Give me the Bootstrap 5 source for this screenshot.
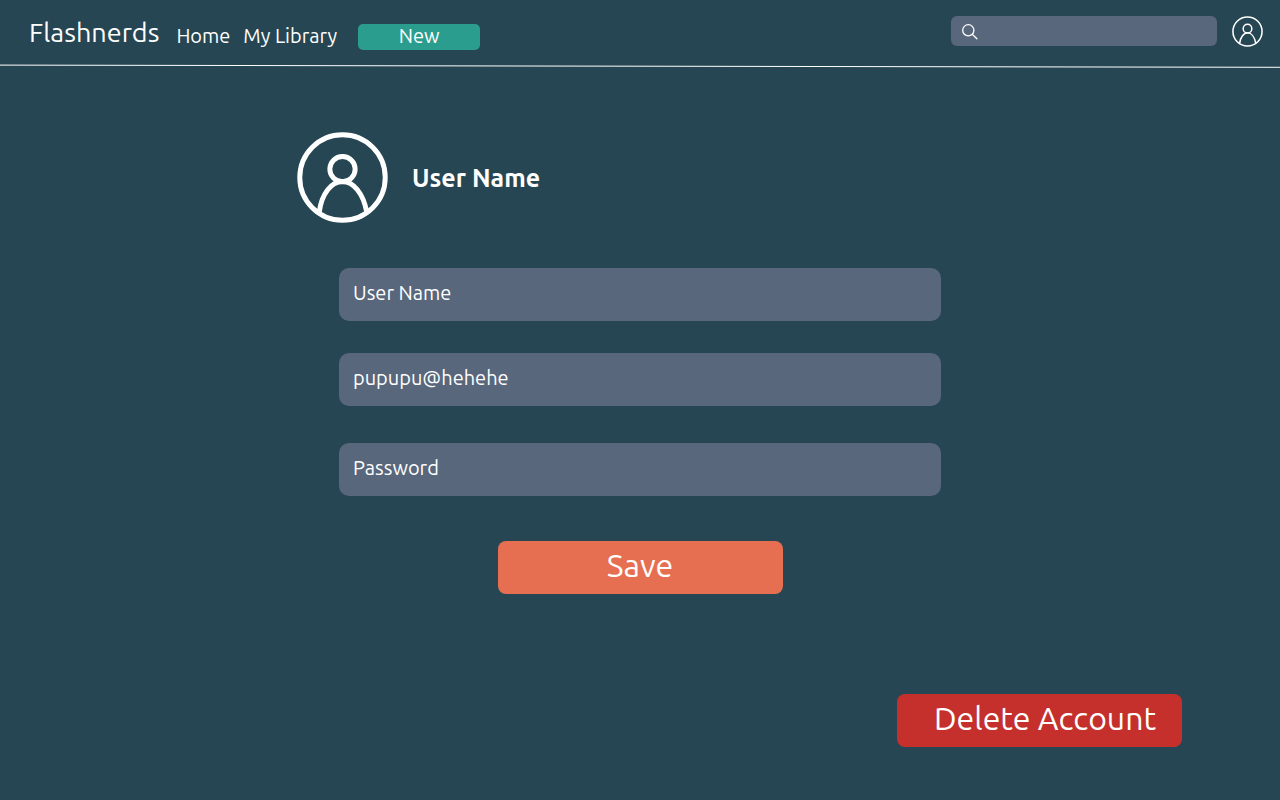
<!DOCTYPE html>
<html lang="en">
<head>
<meta charset="utf-8">
<meta name="viewport" content="width=device-width, initial-scale=1">
<title>Flashnerds – Account</title>
<link href="https://cdn.jsdelivr.net/npm/bootstrap@5.3.0/dist/css/bootstrap.min.css" rel="stylesheet">
<style>
  body { background: #264653; color: #fff; font-family: Ubuntu, "Noto Sans", sans-serif; }
  .topbar { height: 64px; padding: 0 17px 0 29px; }
  .brand { font-size: 27px; line-height: 32px; margin-top: 16px; color: #fff; }
  .menu { margin: 24px 0 0 17px; gap: 13px; font-size: 20px; line-height: 24px; }
  .menu a { color: #fff; }
  .btn-new { width: 122px; height: 26px; margin: 24px 0 0 21px; font-size: 20px; line-height: 24px; --bs-btn-bg: #2a9d8f; --bs-btn-hover-bg: #238377; --bs-btn-color: #fff; --bs-btn-hover-color: #fff; --bs-btn-border-radius: 5px; }
  .btn-new.btn { padding: 0 0 2px; }
  .search { width: 266px; margin: 16px 15px 0 0; }
  .search .form-control { height: 30px; padding: 0 10px 0 36px; border-radius: 6px; }
  .search svg { left: 11px; top: 8px; }
  .profile-link { margin-top: 16px; }
  .rule { height: 4px; }
  .form-control, .form-control:focus { background: #59677c; color: #fff; border: 0; }
  .form-control::placeholder { color: #fff; opacity: 1; }
  .account { max-width: 686px; padding-top: 64px; }
  .account h1 { font-size: 25px; line-height: 32px; }
  .fields { padding: 45px 42px 0; }
  .fields .form-control { height: 53px; padding: 0 14px 4px; font-size: 20px; border-radius: 10px; }
  .field-list { gap: 32px; }
  .password-row { padding-top: 5px; }
  .btn-wide { width: 285px; height: 53px; padding-top: 0; padding-bottom: 4px; font-size: 32px; line-height: 49px; --bs-btn-border-radius: 8px; --bs-btn-color: #fff; --bs-btn-hover-color: #fff; }
  .btn-save { margin-top: 45px; --bs-btn-bg: #e76f51; --bs-btn-hover-bg: #d05f43; }
  .btn-delete { padding-left: 23px; --bs-btn-bg: #c5302c; --bs-btn-hover-bg: #a92724; }
  .danger-zone { padding: 100px 98px 53px 0; }
</style>
</head>
<body>
<svg class="d-none">
  <symbol id="person" viewBox="0 0 92 92">
    <circle cx="46" cy="46" r="43.2"/>
    <circle cx="46" cy="37.5" r="12.8"/>
    <path d="M22.5 81C25 62 35 50 46 50S67 62 70.500 81"/>
  </symbol>
</svg>
<header>
  <nav class="topbar d-flex align-items-start" aria-label="Main">
    <a class="brand text-decoration-none" href="#">Flashnerds</a>
    <div class="menu d-flex">
      <a class="text-decoration-none" href="#">Home</a>
      <a class="text-decoration-none" href="#">My Library</a>
    </div>
    <button class="btn btn-new border-0" type="button">New</button>
    <form class="search position-relative ms-auto" role="search">
      <input class="form-control" type="search" aria-label="Search">
      <svg class="position-absolute" width="17" height="17" viewBox="0 0 17 17" fill="none" stroke="#fff" stroke-width="1.3" stroke-linecap="round" aria-hidden="true"><circle cx="6.300" cy="6.300" r="5.600"/><path d="M10.500 10.500l4.400 4.300"/></svg>
    </form>
    <a class="profile-link" href="#" aria-label="Profile"><svg class="d-block" width="31" height="31" fill="none" stroke="#fff" stroke-width="4.500"><use href="#person"/></svg></a>
  </nav>
  <svg class="rule d-block w-100" viewBox="0 0 1280 4" preserveAspectRatio="none" aria-hidden="true"><path d="M0 1.100L1280 3.300" stroke="#fff" stroke-width="1"/></svg>
</header>
<main>
  <section class="account mx-auto">
    <div class="d-flex align-items-center gap-4">
      <svg width="91" height="91" fill="none" stroke="#fff" stroke-width="5" aria-hidden="true"><use href="#person"/></svg>
      <h1 class="fw-bold mb-0">User Name</h1>
    </div>
    <form class="fields">
      <div class="field-list d-flex flex-column">
        <input class="form-control" type="text" value="User Name" aria-label="User name">
        <input class="form-control" type="text" inputmode="email" value="pupupu@hehehe" aria-label="Email">
        <div class="password-row"><input class="form-control" type="password" placeholder="Password" aria-label="Password"></div>
      </div>
      <div class="text-center"><button class="btn btn-wide btn-save border-0" type="submit">Save</button></div>
    </form>
  </section>
  <div class="danger-zone d-flex justify-content-end">
    <button class="btn btn-wide btn-delete border-0" type="button">Delete Account</button>
  </div>
</main>
<script src="https://cdn.jsdelivr.net/npm/bootstrap@5.3.0/dist/js/bootstrap.bundle.min.js"></script>
</body>
</html>
